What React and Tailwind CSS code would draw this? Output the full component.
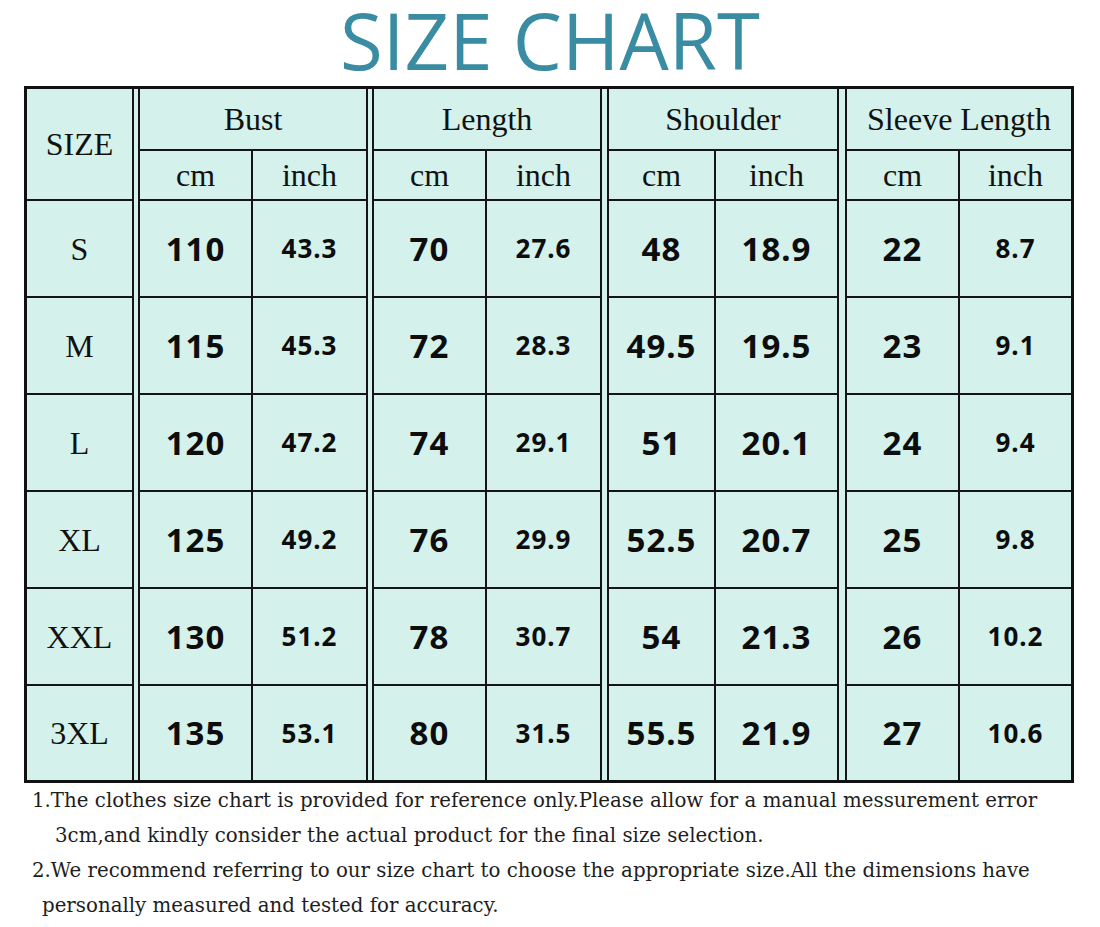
import React from "react";

const rows = [
  { s: "S", v: ["110", "43.3", "70", "27.6", "48", "18.9", "22", "8.7"] },
  { s: "M", v: ["115", "45.3", "72", "28.3", "49.5", "19.5", "23", "9.1"] },
  { s: "L", v: ["120", "47.2", "74", "29.1", "51", "20.1", "24", "9.4"] },
  { s: "XL", v: ["125", "49.2", "76", "29.9", "52.5", "20.7", "25", "9.8"] },
  { s: "XXL", v: ["130", "51.2", "78", "30.7", "54", "21.3", "26", "10.2"] },
  { s: "3XL", v: ["135", "53.1", "80", "31.5", "55.5", "21.9", "27", "10.6"] },
];

const rowH = ["h-[97px]", "h-[97px]", "h-[97px]", "h-[97px]", "h-[97px]", "h-[94px]"];

const serif = { fontFamily: '"Liberation Serif", "Times New Roman", serif' };
const noteSerif = { fontFamily: '"DejaVu Serif", "Liberation Serif", serif' };
const sans = { fontFamily: '"Noto Sans", "Open Sans", sans-serif' };

function Group({ title, idx, cmW, border, inchBig }) {
  return (
    <div className={`flex flex-col ${border}`}>
      <div
        className="h-[62px] border-b-2 border-[#151515] flex items-center justify-center text-[32px] text-[#111]"
        style={serif}
      >
        {title}
      </div>
      <div className="h-[50px] border-b-2 border-[#151515] flex" style={serif}>
        <div className={`${cmW} border-r-2 border-[#151515] flex items-center justify-center text-[32px] text-[#111]`}>
          cm
        </div>
        <div className="flex-1 flex items-center justify-center text-[32px] text-[#111]">inch</div>
      </div>
      {rows.map((r, i) => (
        <div
          key={r.s}
          className={`${rowH[i]} ${i < 5 ? "border-b-2 border-[#151515]" : ""} flex`}
          style={sans}
        >
          <div
            className={`${cmW} border-r-2 border-[#151515] flex items-center justify-center text-[33px] font-bold tracking-[1px] text-[#0d0d0d]`}
          >
            {r.v[idx * 2]}
          </div>
          <div
            className={`flex-1 flex items-center justify-center font-bold tracking-[1px] text-[#0d0d0d] ${
              inchBig ? "text-[33px]" : "text-[26px]"
            }`}
          >
            {r.v[idx * 2 + 1]}
          </div>
        </div>
      ))}
    </div>
  );
}

export default function App() {
  return (
    <div className="w-[1100px] h-[927px] bg-white overflow-hidden">
      <div className="h-[86px] flex justify-center items-start">
        <div
          className="mt-[-13px] h-[106px] leading-[106px] text-center text-[78px] text-[#3a8ca2] whitespace-nowrap"
          style={{ fontFamily: '"Open Sans", "Noto Sans", sans-serif' }}
        >
          SIZE CHART
        </div>
      </div>
      <div className="ml-[24px] w-[1050px] border-[3px] border-[#111] bg-[#d4f1eb] flex">
        <div className="w-[107px] flex flex-col border-r-2 border-[#151515]" style={serif}>
          <div className="h-[112px] border-b-2 border-[#151515] flex items-center justify-center text-[32px] text-[#111]">
            SIZE
          </div>
          {rows.map((r, i) => (
            <div
              key={r.s}
              className={`${rowH[i]} ${i < 5 ? "border-b-2 border-[#151515]" : ""} flex items-center justify-center text-[32px] text-[#111]`}
            >
              {r.s}
            </div>
          ))}
        </div>
        <div className="w-[4px]" />
        <div className="w-[230px]">
          <Group title="Bust" idx={0} cmW="w-[113px]" border="border-x-2 border-[#151515]" />
        </div>
        <div className="w-[4px]" />
        <div className="w-[230px]">
          <Group title="Length" idx={1} cmW="w-[113px]" border="border-x-2 border-[#151515]" />
        </div>
        <div className="w-[5px]" />
        <div className="w-[232px]">
          <Group title="Shoulder" idx={2} cmW="w-[107px]" border="border-x-2 border-[#151515]" inchBig />
        </div>
        <div className="w-[6px]" />
        <div className="flex-1">
          <Group title="Sleeve Length" idx={3} cmW="w-[113px]" border="border-l-2 border-[#151515]" />
        </div>
      </div>
      <div className="text-[19.8px] leading-[35px] text-[#1e1e1e]" style={noteSerif}>
        <div className="pl-[32px] whitespace-nowrap">
          1.The clothes size chart is provided for reference only.Please allow for a manual messurement error
        </div>
        <div className="pl-[55px] whitespace-nowrap">
          3cm,and kindly consider the actual product for the final size selection.
        </div>
        <div className="pl-[32px] whitespace-nowrap">
          2.We recommend referring to our size chart to choose the appropriate size.All the dimensions have
        </div>
        <div className="pl-[42px] whitespace-nowrap">personally measured and tested for accuracy.</div>
      </div>
    </div>
  );
}
